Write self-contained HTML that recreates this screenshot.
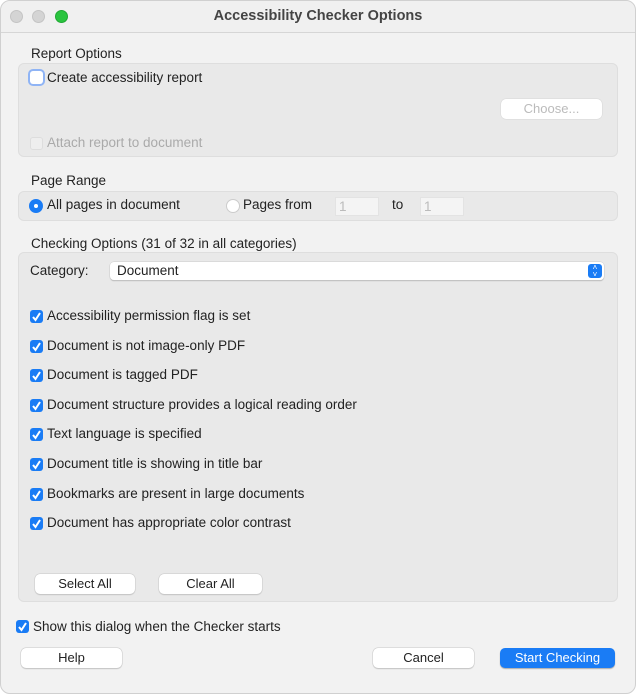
<!DOCTYPE html>
<html><head><style>
*{box-sizing:border-box;margin:0;padding:0}
body{width:636px;height:694px;background:#fff;font-family:"Liberation Sans",sans-serif;font-size:13.5px;color:#222;position:relative;overflow:hidden}
.win{position:absolute;left:0;top:0;width:636px;height:694px;background:#f2f2f2;border-radius:10px;border:1px solid #d0d0d0}
.tb{position:absolute;left:0;top:0;width:634px;height:32px;border-bottom:1px solid #d6d6d6;background:#f0f0f0;border-radius:10px 10px 0 0}
.dot{position:absolute;top:9px;width:13px;height:13px;border-radius:50%;background:#d4d4d4;border:1px solid #c4c4c4}
.t{position:absolute;white-space:nowrap}
.box{position:absolute;background:#e9e9e9;border:1px solid #dedede;border-radius:6px}
.cb{position:absolute;width:13px;height:13px;border-radius:3px;background:#1a7cf5}
.cb svg{position:absolute;left:1px;top:1px}
.btn{position:absolute;height:20px;background:#fff;border-radius:5px;box-shadow:0 0 0 .5px #c8c8c8,0 1px 1px #bbb;text-align:center;line-height:20px;font-size:13px}
.fld{position:absolute;height:19px;background:#f4f4f4;border:1px solid #e3e3e3;color:#bbb;padding-left:3px;line-height:17px}
</style></head><body>
<div class="win">
<div class="tb"></div>
<div class="dot" style="left:9px"></div>
<div class="dot" style="left:31px"></div>
<div class="dot" style="left:54px;background:#2ac43f;border-color:#20a834"></div>
<div class="t" style="left:0;width:634px;text-align:center;top:7px;font-weight:bold;font-size:14.5px;color:#444">Accessibility Checker Options</div>

<div class="t" style="left:30px;top:45px">Report Options</div>
<div class="box" style="left:17px;top:62px;width:600px;height:94px"></div>
<div style="position:absolute;left:27px;top:68px;width:17px;height:17px;border-radius:5px;background:#8fb4f5"></div>
<div style="position:absolute;left:29px;top:70px;width:13px;height:13px;border-radius:3px;background:#fff"></div>
<div class="t" style="left:46px;top:69px">Create accessibility report</div>
<div class="btn" style="left:500px;top:98px;width:101px;color:#bbb;box-shadow:0 0 0 .5px #d8d8d8">Choose...</div>
<div style="position:absolute;left:29px;top:136px;width:13px;height:13px;border-radius:3px;border:1px solid #ddd;background:#eee"></div>
<div class="t" style="left:46px;top:134px;color:#aaa">Attach report to document</div>

<div class="t" style="left:30px;top:172px">Page Range</div>
<div class="box" style="left:17px;top:190px;width:600px;height:30px"></div>
<div style="position:absolute;left:28px;top:198px;width:14px;height:14px;border-radius:50%;background:#1a7cf5"></div>
<div style="position:absolute;left:33px;top:203px;width:4px;height:4px;border-radius:50%;background:#fff"></div>
<div class="t" style="left:46px;top:196px">All pages in document</div>
<div style="position:absolute;left:225px;top:198px;width:14px;height:14px;border-radius:50%;background:#fff;border:1px solid #ccc"></div>
<div class="t" style="left:242px;top:196px">Pages from</div>
<div class="fld" style="left:334px;top:196px;width:44px">1</div>
<div class="t" style="left:391px;top:196px">to</div>
<div class="fld" style="left:419px;top:196px;width:44px">1</div>

<div class="t" style="left:30px;top:235px">Checking Options (31 of 32 in all categories)</div>
<div class="box" style="left:17px;top:251px;width:600px;height:350px"></div>
<div class="t" style="left:29px;top:262px">Category:</div>
<div style="position:absolute;left:109px;top:261px;width:494px;height:18px;background:#fff;border-radius:4px;box-shadow:0 0 0 .5px #ccc,0 1px 1px #aaa"></div>
<div class="t" style="left:116px;top:262px">Document</div>
<div style="position:absolute;left:587px;top:263px;width:14px;height:14px;border-radius:3px;background:#1a7cf5;color:#fff;font-size:8px;line-height:7px;text-align:center">&#708;<br>&#709;</div>

<div id="rows"></div>

<div class="btn" style="left:34px;top:573px;width:100px">Select All</div>
<div class="btn" style="left:158px;top:573px;width:103px">Clear All</div>

<div class="cb" style="left:15px;top:619px"><svg width="11" height="11"><path d="M2 6 L4.5 9 L9 2" stroke="#fff" stroke-width="2" fill="none"/></svg></div>
<div class="t" style="left:32px;top:618px">Show this dialog when the Checker starts</div>

<div class="btn" style="left:20px;top:647px;width:101px">Help</div>
<div class="btn" style="left:372px;top:647px;width:101px">Cancel</div>
<div class="btn" style="left:499px;top:647px;width:115px;background:#1a7cf5;color:#fff;box-shadow:0 1px 1px #aaa">Start Checking</div>
</div>
<script>
var L=["Accessibility permission flag is set","Document is not image-only PDF","Document is tagged PDF","Document structure provides a logical reading order","Text language is specified","Document title is showing in title bar","Bookmarks are present in large documents","Document has appropriate color contrast"];
var h="";L.forEach(function(s,i){var y=Math.round(309+i*29.6);
h+='<div class="cb" style="left:29px;top:'+y+'px"><svg width="11" height="11"><path d="M2 6 L4.5 9 L9 2" stroke="#fff" stroke-width="2" fill="none"/></svg></div><div class="t" style="left:46px;top:'+(y-2)+'px">'+s+'</div>';});
document.getElementById("rows").outerHTML=h;
</script>
</body></html>
